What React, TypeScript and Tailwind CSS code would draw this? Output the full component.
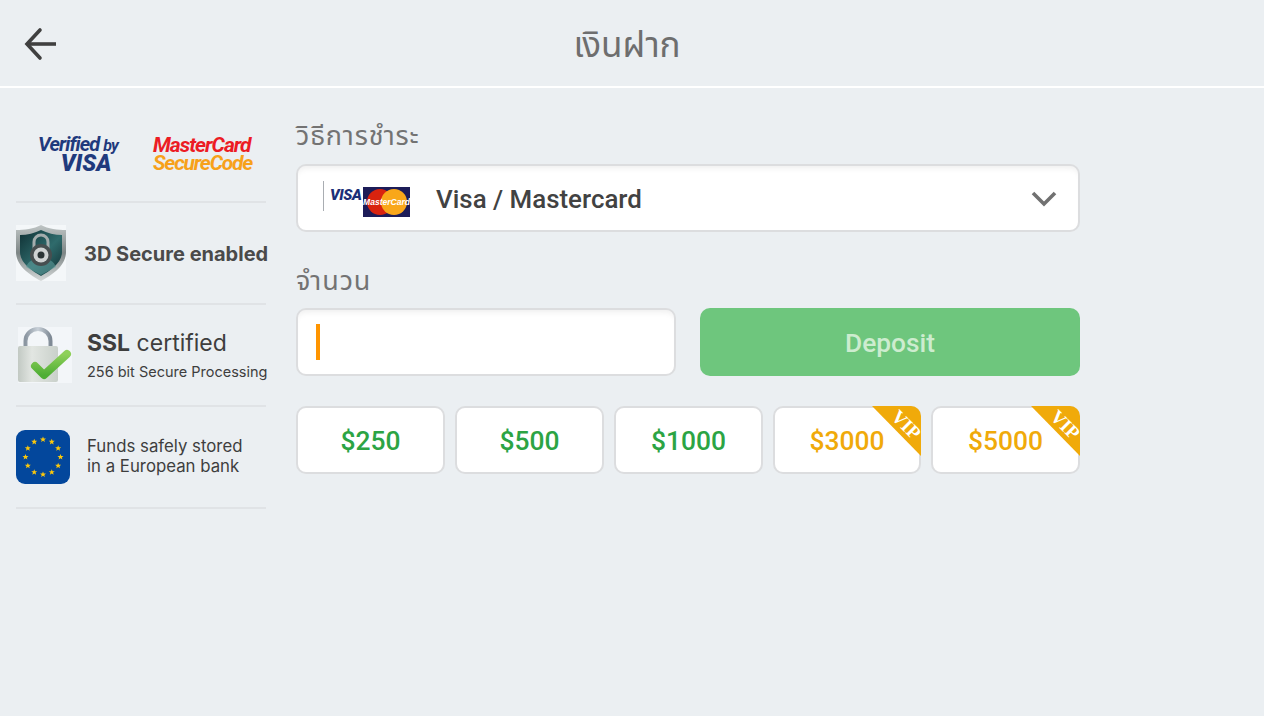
import React from "react";

const thai = "font-['Noto_Sans_Thai','Noto_Sans','DejaVu_Sans',sans-serif]";

function ShieldIcon() {
  return (
    <svg width="50" height="56" viewBox="0 0 50 56" className="shrink-0">
      <defs>
        <linearGradient id="rim" x1="0" y1="0" x2="0" y2="1">
          <stop offset="0" stopColor="#bfc5c5" />
          <stop offset="0.5" stopColor="#7d8585" />
          <stop offset="1" stopColor="#d5d9d9" />
        </linearGradient>
        <linearGradient id="face" x1="0" y1="0" x2="1" y2="1">
          <stop offset="0" stopColor="#0f3034" />
          <stop offset="0.55" stopColor="#2f6b6c" />
          <stop offset="1" stopColor="#0f2c30" />
        </linearGradient>
      </defs>
      <rect width="50" height="56" fill="#f4f7f9" />
      <path d="M25 0 C18 4 8 5 0 5 L0 27 C0 41 14 50 25 56 C36 50 50 41 50 27 L50 5 C42 5 32 4 25 0Z" fill="url(#rim)" />
      <path d="M25 5 C19 8 11 10 4 10 L4 27 C4 38 16 46 25 51 C34 46 46 38 46 27 L46 10 C39 10 31 8 25 5Z" fill="url(#face)" />
      <path d="M10 42 C14 30 36 30 40 42 L25 50Z" fill="#5d9c9b" opacity="0.6" />
      <path d="M18 26 V17 A7 7 0 0 1 32 17 V26" fill="none" stroke="#a4adad" strokeWidth="3" />
      <circle cx="25" cy="30" r="11" fill="#474f50" />
      <circle cx="25" cy="30" r="7.5" fill="#cfd3d3" />
      <circle cx="25" cy="30" r="3.5" fill="#2b3435" />
    </svg>
  );
}

function LockIcon() {
  return (
    <svg width="54" height="56" viewBox="0 0 54 56" className="shrink-0">
      <defs>
        <linearGradient id="body" x1="0" y1="0" x2="1" y2="0">
          <stop offset="0" stopColor="#c2c9c3" />
          <stop offset="0.35" stopColor="#e2e6e2" />
          <stop offset="1" stopColor="#c9d0ca" />
        </linearGradient>
        <linearGradient id="hoop" x1="0" y1="0" x2="1" y2="0">
          <stop offset="0" stopColor="#8b96a1" />
          <stop offset="0.5" stopColor="#c8d0d8" />
          <stop offset="1" stopColor="#7f8a95" />
        </linearGradient>
        <linearGradient id="tick" x1="0" y1="0" x2="0" y2="1">
          <stop offset="0" stopColor="#8fd05a" />
          <stop offset="1" stopColor="#4fae35" />
        </linearGradient>
      </defs>
      <rect width="54" height="56" fill="#f3f6f9" />
      <path d="M7.5 22 V14 A12.5 12 0 0 1 32.5 14 V22" fill="none" stroke="url(#hoop)" strokeWidth="4" />
      <rect x="0" y="19" width="40" height="36" rx="2" fill="url(#body)" />
      <path d="M17 39 L26 48 L49 27" fill="none" stroke="url(#tick)" strokeWidth="8" strokeLinejoin="round" strokeLinecap="round" />
    </svg>
  );
}

function EuFlag() {
  const stars = Array.from({ length: 12 }, (_, i) => {
    const a = (i * Math.PI) / 6;
    return { x: 27 + 17.5 * Math.sin(a), y: 27 - 17.5 * Math.cos(a) };
  });
  return (
    <svg width="54" height="54" viewBox="0 0 54 54" className="shrink-0">
      <rect width="54" height="54" rx="9" fill="#03479c" />
      {stars.map((s, i) => (
        <polygon
          key={i}
          transform={`translate(${s.x} ${s.y})`}
          points="0,-3 0.8,-1 3,-1 1.3,0.4 1.9,2.6 0,1.3 -1.9,2.6 -1.3,0.4 -3,-1 -0.8,-1"
          fill="#fcc80b"
        />
      ))}
    </svg>
  );
}

function SmallCards() {
  return (
    <div className="flex items-start w-[87px] h-[38px] shrink-0">
      <div className="w-px h-[30px] bg-[#a9adb2] mr-[6px] mt-px" />
      <span className="font-['Roboto',sans-serif] italic font-black text-[15px] leading-[30px] h-[30px] text-[#1c2f78] w-[33px] tracking-[-0.4px]">
        VISA
      </span>
      <svg width="47" height="30" viewBox="0 0 47 30" className="mt-[7px] shrink-0">
        <rect width="47" height="30" fill="#1d1c58" />
        <circle cx="17" cy="15" r="13" fill="#d9230f" />
        <circle cx="31" cy="15" r="13" fill="#f9a71a" />
        <text x="23.5" y="18" textAnchor="middle" fontSize="8.5" fontWeight="700" fontStyle="italic" fill="#fff" fontFamily="Liberation Sans">
          MasterCard
        </text>
      </svg>
    </div>
  );
}

function Chip({ amount, vip, narrow }: { amount: string; vip?: boolean; narrow?: boolean }) {
  return (
    <div className={`relative h-[68px] pt-[4px] bg-white border-2 border-[#dcdddf] rounded-[10px] flex items-center justify-center ${narrow ? "w-[148px]" : "w-[149px]"}`}>
      <span className={`font-['Roboto',sans-serif] font-medium text-[26.4px] ${vip ? "text-[#f0aa0a]" : "text-[#2ca444]"}`}>
        {amount}
      </span>
      {vip && (
        <div className="absolute top-[-2px] right-[-2px] w-[49px] h-[50px]">
          <svg width="49" height="50" viewBox="0 0 49 50" className="absolute inset-0">
            <path d="M0 0 H39 A10 10 0 0 1 49 10 V50 Z" fill="#f0aa0a" />
          </svg>
          <span className="absolute top-[8px] right-[1px] w-[30px] text-center rotate-45 font-['Liberation_Serif',serif] font-bold text-[19px] leading-[20px] text-white">
            VIP
          </span>
        </div>
      )}
    </div>
  );
}

export default function App() {
  return (
    <div className="min-h-[716px] bg-[#ebeff2] font-['Inter',sans-serif]">
      <header className="h-[88px] pt-[8px] border-b-2 border-white flex items-center relative">
        <svg width="36" height="36" viewBox="0 0 36 36" fill="none" stroke="#404040" strokeWidth="3.6" className="absolute left-[23px] top-[26px]">
          <path d="M33 18 H4" />
          <path d="M17 4 L4 18 L17 32" strokeLinecap="round" />
        </svg>
        <h1 className={`w-full pr-[10px] text-center text-[35px] font-normal text-[#6e6e6e] ${thai}`}>เงินฝาก</h1>
      </header>

      <div className="flex">
        <aside className="w-[250px] ml-4 shrink-0 pt-[13px]">
          <div className="h-[102px] border-b-2 border-[#e0e3e6] flex items-center pl-[21px] pt-[6px]">
            <div className="w-[116px] text-[#1f3a7d] font-['Roboto',sans-serif] italic font-bold text-center leading-none">
              <div className="text-[20px] tracking-[-0.9px] w-[82px] whitespace-nowrap">Verified <span className="text-[16px]">by</span></div>
              <div className="text-[23px] font-black w-[82px] ml-[8px] -mt-[2px]">VISA</div>
            </div>
            <div className="font-['Roboto',sans-serif] font-bold italic leading-[18px] w-[100px] tracking-[-1px] whitespace-nowrap">
              <div className="text-[21px] text-[#ec1c24]">MasterCard</div>
              <div className="text-[21px] tracking-[-1.2px] text-[#f7a11a]">SecureCode</div>
            </div>
          </div>
          <div className="h-[102px] border-b-2 border-[#e0e3e6] flex items-center gap-[18px]">
            <ShieldIcon />
            <span className="font-bold text-[20px] mt-[2px] whitespace-nowrap text-[#4a4a4a]">3D Secure enabled</span>
          </div>
          <div className="h-[102px] border-b-2 border-[#e0e3e6] flex items-center pl-[2px] gap-[15px]">
            <LockIcon />
            <div className="whitespace-nowrap text-[#3e3e3e]">
              <div className="text-[23px] leading-7">
                <span className="font-bold">SSL</span> certified
              </div>
              <div className="text-[14.5px] mt-[5px] leading-5">256 bit Secure Processing</div>
            </div>
          </div>
          <div className="h-[102px] border-b-2 border-[#e0e3e6] flex items-center gap-[17px]">
            <EuFlag />
            <div className="text-[16.8px] leading-[20px] mb-[2px] text-[#3e3e3e]">
              Funds safely stored
              <br />
              in a European bank
            </div>
          </div>
        </aside>

        <main className="w-[784px] ml-[30px] pt-[32px] font-['Roboto',sans-serif]">
          <div className={`text-[27px] tracking-[0.9px] leading-[34px] h-[32px] text-[#737373] ${thai}`}>วิธีการชำระ</div>
          <div className="mt-3 h-[68px] pt-[2px] bg-white border-2 border-[#dcdddf] rounded-[10px] flex items-center pl-[25px] pr-[21px] shadow-[inset_0_6px_6px_-4px_rgba(0,0,0,0.07)]">
            <SmallCards />
            <span className="ml-[26px] text-[25.9px] font-medium text-[#424242]">Visa / Mastercard</span>
            <svg width="26" height="16" viewBox="0 0 26 16" fill="none" stroke="#717171" strokeWidth="3.6" className="ml-auto">
              <path d="M2 2 L13 13 L24 2" />
            </svg>
          </div>

          <div className={`mt-[33px] text-[27px] tracking-[0.9px] leading-[34px] h-[32px] text-[#737373] ${thai}`}>จำนวน</div>
          <div className="mt-[11px] flex gap-6">
            <div className="w-[380px] h-[68px] bg-white border-2 border-[#dcdddf] rounded-[10px] flex items-center pl-[18px] shadow-[inset_0_6px_6px_-4px_rgba(0,0,0,0.07)]">
              <div className="w-1 h-9 bg-[#ff9500]" />
            </div>
            <button className="w-[380px] h-[68px] pt-[4px] rounded-[10px] bg-[#6ec67d] text-[#cdeccf] text-[26.3px] font-medium">Deposit</button>
          </div>

          <div className="mt-[30px] flex gap-[10px]">
            <Chip amount="$250" />
            <Chip amount="$500" />
            <Chip amount="$1000" />
            <Chip amount="$3000" vip narrow />
            <Chip amount="$5000" vip />
          </div>
        </main>
      </div>
    </div>
  );
}
